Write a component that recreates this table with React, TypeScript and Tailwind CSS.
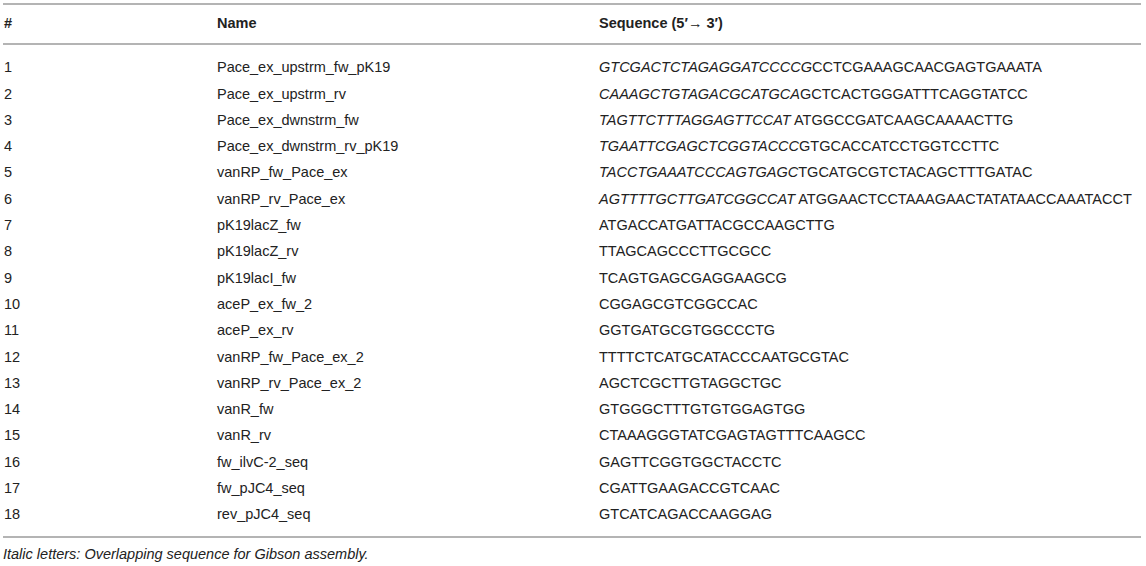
import React from "react";

type Row = { n: number; name: string; it?: string; seq: string };

const rows: Row[] = [
  { n: 1, name: "Pace_ex_upstrm_fw_pK19", it: "GTCGACTCTAGAGGATCCCCG", seq: "CCTCGAAAGCAACGAGTGAAATA" },
  { n: 2, name: "Pace_ex_upstrm_rv", it: "CAAAGCTGTAGACGCATGCA", seq: "GCTCACTGGGATTTCAGGTATCC" },
  { n: 3, name: "Pace_ex_dwnstrm_fw", it: "TAGTTCTTTAGGAGTTCCAT", seq: " ATGGCCGATCAAGCAAAACTTG" },
  { n: 4, name: "Pace_ex_dwnstrm_rv_pK19", it: "TGAATTCGAGCTCGGTACCC", seq: "GTGCACCATCCTGGTCCTTC" },
  { n: 5, name: "vanRP_fw_Pace_ex", it: "TACCTGAAATCCCAGTGAGC", seq: "TGCATGCGTCTACAGCTTTGATAC" },
  { n: 6, name: "vanRP_rv_Pace_ex", it: "AGTTTTGCTTGATCGGCCAT", seq: " ATGGAACTCCTAAAGAACTATATAACCAAATACCT" },
  { n: 7, name: "pK19lacZ_fw", seq: "ATGACCATGATTACGCCAAGCTTG" },
  { n: 8, name: "pK19lacZ_rv", seq: "TTAGCAGCCCTTGCGCC" },
  { n: 9, name: "pK19lacI_fw", seq: "TCAGTGAGCGAGGAAGCG" },
  { n: 10, name: "aceP_ex_fw_2", seq: "CGGAGCGTCGGCCAC" },
  { n: 11, name: "aceP_ex_rv", seq: "GGTGATGCGTGGCCCTG" },
  { n: 12, name: "vanRP_fw_Pace_ex_2", seq: "TTTTCTCATGCATACCCAATGCGTAC" },
  { n: 13, name: "vanRP_rv_Pace_ex_2", seq: "AGCTCGCTTGTAGGCTGC" },
  { n: 14, name: "vanR_fw", seq: "GTGGGCTTTGTGTGGAGTGG" },
  { n: 15, name: "vanR_rv", seq: "CTAAAGGGTATCGAGTAGTTTCAAGCC" },
  { n: 16, name: "fw_ilvC-2_seq", seq: "GAGTTCGGTGGCTACCTC" },
  { n: 17, name: "fw_pJC4_seq", seq: "CGATTGAAGACCGTCAAC" },
  { n: 18, name: "rev_pJC4_seq", seq: "GTCATCAGACCAAGGAG" },
];

export default function App() {
  return (
    <div className="w-[1146px] h-[566px] overflow-hidden bg-white text-[#222222] font-['Liberation_Sans',Arial,Helvetica,sans-serif] text-[14.5px]">
      <div className="w-[1141px] pl-[3px]">
        <div className="mt-[3px] h-[2px] bg-[#b4b4b4]" />
        <div className="grid grid-cols-[213px_382px_1fr] h-[38px] items-center pl-[1px] font-bold whitespace-nowrap">
          <div>#</div>
          <div>Name</div>
          <div>Sequence (5′→ 3′)</div>
        </div>
        <div className="h-[2px] bg-[#b4b4b4]" />
        <div className="pt-[10px] pb-[8px]">
          {rows.map((r) => (
            <div
              key={r.n}
              className="grid grid-cols-[213px_382px_1fr] h-[26.3px] items-center pl-[1px] whitespace-nowrap"
            >
              <div>{r.n}</div>
              <div>{r.name}</div>
              <div className="whitespace-pre">
                {r.it && <span className="italic">{r.it}</span>}
                {r.seq}
              </div>
            </div>
          ))}
        </div>
        <div className="h-[2px] bg-[#b4b4b4]" />
        <div className="mt-[8px] italic text-[14.5px] leading-[17px]">
          Italic letters: Overlapping sequence for Gibson assembly.
        </div>
      </div>
    </div>
  );
}
